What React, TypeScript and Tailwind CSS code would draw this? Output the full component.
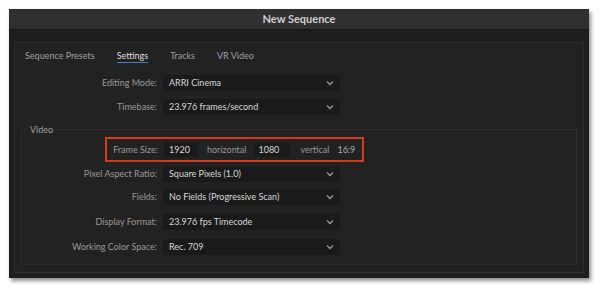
import React from "react";

const font = { fontFamily: "Lato, 'Open Sans', sans-serif" };

function Chevron() {
  return (
    <svg width="8" height="6" viewBox="0 0 8 6" className="shrink-0">
      <path d="M1 1.5 L4 4.5 L7 1.5" stroke="#9a9a9a" strokeWidth="1.3" fill="none" />
    </svg>
  );
}

function Select({ value }: { value: string }) {
  return (
    <div className="ml-[6px] flex h-[16px] w-[177px] items-center justify-between rounded-[2px] bg-[#1a1a1a] pl-[6px] pr-[6px] text-[#d6d6d6]">
      <span>{value}</span>
      <Chevron />
    </div>
  );
}

function Row({ label, value, labelW, h = 24 }: { label: string; value: string; labelW: number; h?: number }) {
  return (
    <div className="flex items-center" style={{ height: h }}>
      <div className="text-right text-[#999999]" style={{ width: labelW }}>
        {label}
      </div>
      <Select value={value} />
    </div>
  );
}

export default function App() {
  return (
    <div className="h-[288px] w-[600px] bg-white pl-[9px] pt-[9px] text-[9px]" style={font}>
      <div className="flex h-[269px] w-[580px] flex-col bg-[#1e1e1e] shadow-[2px_3px_4px_rgba(0,0,0,0.45)]">
        <div className="flex h-[21px] items-center justify-center border-b border-[#151515] bg-[#303030] text-[11px] font-bold text-[#cfcfcf]">
          New Sequence
        </div>
        <div className="h-[12px]" />
        <div className="mx-[5px] flex h-[231px] flex-col border border-[#2d2d2d] bg-[#222222]">
          <div className="flex h-[25px] items-center gap-[22px] pl-[10px] text-[#a0a0a0]">
            <span>Sequence Presets</span>
            <span className="relative text-[#dcdcdc]">
              Settings
              <span className="absolute left-0 right-0 top-[13px] h-[1.5px] bg-[#3b82d6]" />
            </span>
            <span>Tracks</span>
            <span>VR Video</span>
          </div>
          <div className="pt-[3px]">
            <Row label="Editing Mode:" value="ARRI Cinema" labelW={142} />
            <Row label="Timebase:" value="23.976  frames/second" labelW={142} />
          </div>
          <div className="relative mx-[6px] mt-[10px] h-[136px] border border-[#2d2d2d]">
            <span className="absolute left-[7px] top-[-7px] bg-[#222222] px-[1px] text-[#a0a0a0]">Video</span>
            <div className="pt-[7px]">
              <div className="ml-[83px] flex h-[25px] w-[259px] items-center border-2 border-[#d23a22]">
                <div className="w-[51px] text-right text-[#999999]">Frame Size:</div>
                <div className="ml-[6px] flex h-[15px] w-[34px] items-center bg-[#1a1a1a] pl-[5px] text-[#d6d6d6]">1920</div>
                <div className="ml-[9px] text-[#999999]">horizontal</div>
                <div className="ml-[8px] flex h-[15px] w-[36px] items-center bg-[#1a1a1a] pl-[4px] text-[#d6d6d6]">1080</div>
                <div className="ml-[10px] text-[#999999]">vertical</div>
                <div className="ml-[8px] text-[#b0b0b0]">16:9</div>
              </div>
              <Row label="Pixel Aspect Ratio:" value="Square Pixels (1.0)" labelW={135} h={23} />
              <Row label="Fields:" value="No Fields (Progressive Scan)" labelW={135} />
              <Row label="Display Format:" value="23.976 fps Timecode" labelW={135} h={26} />
              <Row label="Working Color Space:" value="Rec. 709" labelW={135} />
            </div>
          </div>
        </div>
      </div>
    </div>
  );
}
